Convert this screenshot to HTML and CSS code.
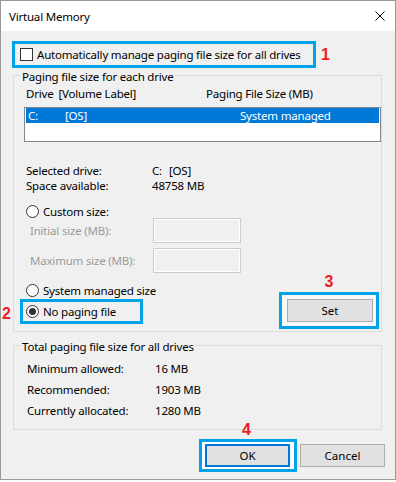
FILE: index.html
```html
<!DOCTYPE html>
<html lang="en">
<head>
    <meta charset="UTF-8">
    <title>Virtual Memory</title>
    <link rel="stylesheet" href="styles.css">
</head>
<body>
    <div class="window">
        <div class="titlebar">
            <span class="title">Virtual Memory</span>
            <svg class="close" width="10" height="10" viewBox="0 0 10 10">
                <path d="M0.5 0.5L9.5 9.5M9.5 0.5L0.5 9.5" stroke="#000" stroke-width="1" fill="none"/>
            </svg>
        </div>

        <div class="content">
            <div class="auto-row">
                <label class="mark-box auto-box"><span class="checkbox"></span>Automatically manage paging file size for all drives</label>
                <span class="step">1</span>
            </div>

            <fieldset class="group drives">
                <legend>Paging file size for each drive</legend>
                <div class="list-head">
                    <span class="col-drive">Drive<span class="vol">[Volume Label]</span></span>
                    <span>Paging File Size (MB)</span>
                </div>
                <div class="listbox">
                    <div class="list-row selected">
                        <span class="col-letter">C:</span>
                        <span class="col-label">[OS]</span>
                        <span>System managed</span>
                    </div>
                </div>

                <div class="info">
                    <span>Selected drive:</span><span>C:<span class="vol-os">[OS]</span></span>
                    <span>Space available:</span><span>48758 MB</span>
                </div>

                <div class="radio-row custom"><span class="radio"></span>Custom size:</div>
                <div class="size-row">
                    <span class="size-label">Initial size (MB):</span>
                    <span class="size-input"></span>
                </div>
                <div class="size-row second">
                    <span class="size-label">Maximum size (MB):</span>
                    <span class="size-input"></span>
                </div>

                <div class="choose-row">
                    <div class="choices">
                        <div class="radio-row"><span class="radio"></span>System managed size</div>
                        <div class="mark-box nopage-box">
                            <span class="step step-2">2</span>
                            <span class="radio checked"></span>No paging file
                        </div>
                    </div>
                    <div class="mark-box set-box">
                        <span class="step step-3">3</span>
                        <button class="btn">Set</button>
                    </div>
                </div>
            </fieldset>

            <fieldset class="group total">
                <legend>Total paging file size for all drives</legend>
                <div class="totals">
                    <span>Minimum allowed:</span><span>16 MB</span>
                    <span>Recommended:</span><span>1903 MB</span>
                    <span>Currently allocated:</span><span>1280 MB</span>
                </div>
            </fieldset>

            <div class="actions">
                <div class="mark-box ok-box">
                    <span class="step step-4">4</span>
                    <button class="btn default">OK</button>
                </div>
                <button class="btn cancel">Cancel</button>
            </div>
        </div>
    </div>
</body>
</html>
```

FILE: styles.css
```css
* {
    margin: 0;
    padding: 0;
    box-sizing: border-box;
}

body {
    font-family: "Noto Sans", sans-serif;
    font-size: 11.5px;
    letter-spacing: -0.2px;
    color: #000;
    background: #fff;
}

.window {
    width: 396px;
    height: 480px;
    border: 1px solid #999;
    background: #f0f0f0;
}

.titlebar {
    height: 30px;
    background: #fff;
    display: flex;
    align-items: center;
    justify-content: space-between;
    padding: 0 10px 0 8px;
}

.content {
    padding: 10px 13px 0 12px;
}

/* cyan boxes and red numbers drawn over the dialog */
.mark-box {
    border: 3px solid #00a2e8;
    position: relative;
}

.step {
    color: #ed1c24;
    font: bold 16px "Liberation Sans", sans-serif;
    line-height: 16px;
    letter-spacing: 0;
}

.mark-box .step {
    position: absolute;
}

.auto-row {
    display: flex;
    align-items: center;
    margin-left: -1px;
}

.auto-box {
    display: flex;
    align-items: center;
    gap: 4px;
    width: 304px;
    height: 27px;
    padding-left: 5px;
    white-space: nowrap;
}

.auto-row .step {
    margin-left: 5px;
}

.checkbox {
    width: 13px;
    height: 13px;
    border: 1px solid #333;
    background: #fff;
}

.group {
    border: 1px solid #dcdcdc;
    min-width: 0;
}

.group legend {
    margin-left: 6px;
    padding: 4px 2px 0;
    line-height: 10px;
}

.list-head {
    display: flex;
    margin: 4px 0 0 12px;
    line-height: 15px;
}

.col-drive {
    width: 180px;
}

.vol {
    margin-left: 5px;
}

.listbox {
    margin: 6px 0 0 10px;
    height: 35px;
    border: 1px solid #828790;
    background: #fff;
    padding: 0 1px;
}

.list-row {
    display: flex;
    height: 15px;
    line-height: 15px;
    padding-left: 2px;
}

.list-row.selected {
    background: #0078d7;
    color: #fff;
}

.col-letter {
    width: 37px;
}

.col-label {
    width: 175px;
}

.info {
    display: grid;
    grid-template-columns: 126px auto;
    margin: 21px 0 0 12px;
    line-height: 15px;
}

.vol-os {
    margin-left: 7px;
}

.radio-row {
    display: flex;
    align-items: center;
    gap: 4px;
    height: 14px;
    margin-left: 12px;
}

.custom {
    margin-top: 11px;
}

.radio {
    width: 13px;
    height: 13px;
    border: 1px solid #333;
    border-radius: 50%;
    background: #fff;
    display: flex;
    align-items: center;
    justify-content: center;
}

.radio.checked::after {
    content: "";
    width: 7px;
    height: 7px;
    border-radius: 50%;
    background: #333;
}

.size-row {
    display: flex;
    align-items: center;
    height: 25px;
    margin-left: 16px;
    color: #9a9a9a;
}

.size-row.second {
    margin-top: 5px;
}

.size-label {
    width: 123px;
}

.size-input {
    width: 88px;
    height: 25px;
    border: 1px solid #cccccc;
    box-shadow: inset 0 0 0 1px #fff;
}

.choose-row {
    display: flex;
    justify-content: space-between;
    align-items: flex-start;
    margin: 10px 2px 2px 0;
}

.nopage-box {
    display: flex;
    align-items: center;
    gap: 4px;
    width: 123px;
    height: 25px;
    margin: 2px 0 0 6px;
    padding-left: 3px;
}

.step-2 {
    left: -21px;
    top: 4px;
}

.set-box {
    width: 100px;
    height: 37px;
    margin-top: 9px;
    padding: 4px 3px 4px 5px;
    background: #f7f7f7;
}

.step-3 {
    left: 0;
    right: 0;
    top: -21px;
    text-align: center;
}

.btn {
    font: inherit;
    color: #000;
    background: #e1e1e1;
    border: 1px solid #adadad;
    width: 86px;
    height: 23px;
}

.total {
    margin-top: 6px;
}

.totals {
    display: grid;
    grid-template-columns: 128px auto;
    padding: 6px 0 8px 13px;
    line-height: 21px;
}

.actions {
    display: flex;
    justify-content: flex-end;
    align-items: center;
    margin: 9px -3px 0 0;
}

.ok-box {
    width: 98px;
    height: 33px;
    padding: 2px 4px 2px 3px;
    background: #fff;
}

.step-4 {
    left: 0;
    right: 3px;
    top: -20px;
    text-align: center;
}

.btn.default {
    width: 85px;
    border: 2px solid #0078d7;
}

.btn.cancel {
    width: 85px;
    margin-left: 3px;
}
```
